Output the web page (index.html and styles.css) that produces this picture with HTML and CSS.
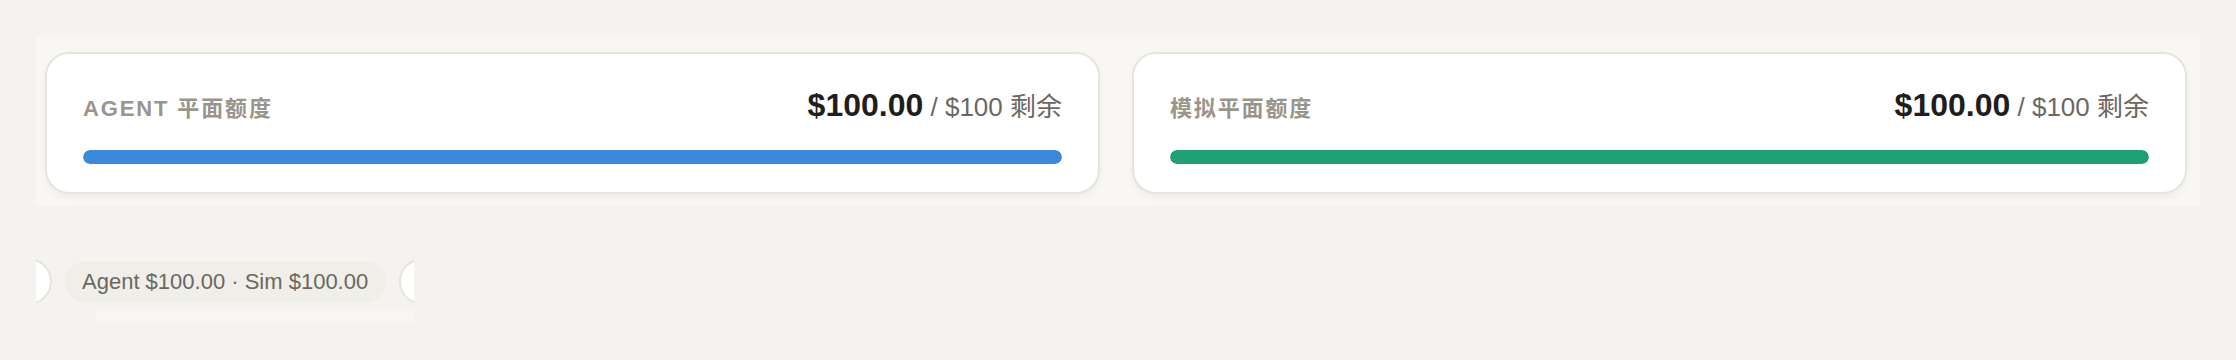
FILE: index.html
```html
<!DOCTYPE html>
<html lang="zh-CN">
<head>
<meta charset="utf-8">
<title>额度</title>
<link rel="stylesheet" href="styles.css">
</head>
<body>
<div class="page">
  <section class="panel">
    <div class="card">
      <div class="card-row">
        <span class="label">AGENT 平面额度</span>
        <span class="amount"><strong class="value">$100.00</strong> <span class="total">/ $100 剩余</span></span>
      </div>
      <div class="track"><div class="fill fill-blue" style="width:100%"></div></div>
    </div>
    <div class="card">
      <div class="card-row">
        <span class="label">模拟平面额度</span>
        <span class="amount"><strong class="value">$100.00</strong> <span class="total">/ $100 剩余</span></span>
      </div>
      <div class="track"><div class="fill fill-green" style="width:100%"></div></div>
    </div>
  </section>
  <div class="strip">
    <div class="ghost ghost-left"></div>
    <span class="pill">Agent $100.00 · Sim $100.00</span>
    <div class="ghost ghost-right"></div>
  </div>
</div>
</body>
</html>
```
FILE: styles.css
```css
html, body {
  margin: 0;
  background: #f5f3ef;
}
body {
  font-family: "Liberation Sans", Arial, "Noto Sans CJK SC", sans-serif;
}
.page {
  padding: 36px 36px 0;
  display: flex;
  flex-direction: column;
  gap: 52px;
}
.panel {
  display: grid;
  grid-template-columns: 1fr 1fr;
  gap: 32px;
  padding: 16px 13px 12px 9px;
  background: #f8f7f4;
}
.card {
  background: #fff;
  border: 2px solid #e7e4db;
  border-radius: 24px;
  padding: 32px 36px 28px;
  box-shadow: 0 3px 6px rgba(60, 50, 30, 0.05);
}
.card-row {
  display: flex;
  justify-content: space-between;
  align-items: baseline;
  margin-bottom: 26px;
}
.label {
  font-size: 22px;
  font-weight: 700;
  letter-spacing: 0.085em;
  color: #9a958b;
}
.amount {
  font-size: 26px;
  white-space: nowrap;
}
.value {
  font-size: 32px;
  font-weight: 700;
  color: #1f1e1c;
}
.total {
  font-size: 26px;
  color: #6c6861;
}
.track {
  height: 14px;
  border-radius: 7px;
  background: #eeece6;
  overflow: hidden;
}
.fill {
  height: 100%;
  border-radius: 7px;
}
.fill-blue { background: #3a89dc; }
.fill-green { background: #1f9f76; }

.strip {
  width: 378px;
  display: flex;
  align-items: center;
  gap: 13px;
  overflow: hidden;
  padding-bottom: 17px;
  background: linear-gradient(#f7f6f2, #f7f6f2) no-repeat 60px 52px / 318px 12px;
}
.ghost {
  flex: none;
  width: 200px;
  height: 47px;
  box-sizing: border-box;
  background: #fff;
  border: 2px solid #e6e3da;
  border-radius: 24px;
}
.ghost-left {
  margin-left: -184px;
}
.pill {
  flex: none;
  height: 42px;
  line-height: 42px;
  padding: 0 18px 0 17px;
  border-radius: 21px;
  background: #f0eee8;
  font-size: 22px;
  color: #6b675f;
  white-space: nowrap;
}
```
